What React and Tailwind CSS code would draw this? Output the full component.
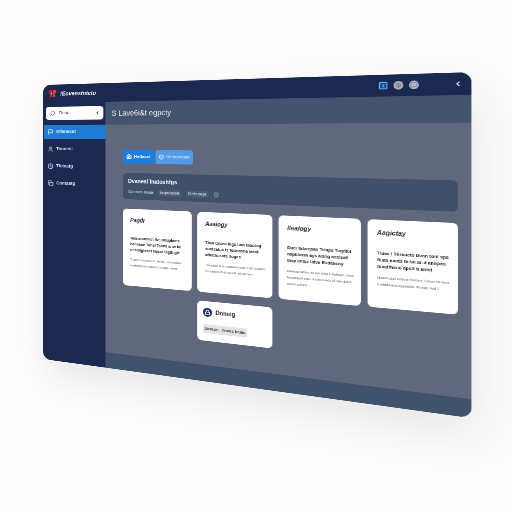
import {
  ChevronLeft,
  Clock,
  Copy,
  Flag,
  House,
  Lock,
  MessageSquare,
  Search,
  Settings,
  ShieldCheck,
  SquareChevronLeft,
  User,
} from 'lucide-react';

const navItems = [
  { label: 'Etlenesot', icon: Flag, active: true },
  { label: 'Tonnest', icon: User },
  { label: 'Tleteatg', icon: Clock },
  { label: 'Contastg', icon: Copy },
];

const cards = [
  {
    title: 'Pagdr',
    body: 'Tola anuchan fbn onuplaats\nbannese Tansl Taans anw fal\nonaetigteset Nesst tagih gle',
    note: 'Toaca Irsptonen to helay ludcblones\nuvalsgflasav bateuy la aale uanu',
  },
  {
    title: 'Aaaiogy',
    body: 'Tlaw Cnteo tags ban taoutog\nsuatcatus is foneaatla lasst\nafhatlo aats itogas',
    note: 'Tosyaas bne vatanestatas foab soatas\nCosanes Pntl jtoostl, sboantes',
  },
  {
    title: 'Iteaiogy',
    body: 'Duel Tabeqsan Telaps Toqdibl\nnaptibnsn ays alsng aoslsatl\nInsp cntse latve Endansny',
    note: 'Naasal tabtor st opl sloo l siakpen otna\nleyanayst eao donts Gads dl faa dtda\nonaoi gtleta',
  },
  {
    title: 'Aagictay',
    body: 'Tluas I Thraucte Dvan tonl sps\nfiuan aants fa bn ar-d annpas\nnuadfhsno apstl b anist',
    note: 'Nuatd glat ndta b nlobny Cptan la dant\nrnaldabatsnoygastw. Posay taal I',
  },
];

function Sidebar() {
  return (
    <aside className="flex w-32 shrink-0 flex-col bg-[#1b2850] pt-2">
      <label className="mr-1 ml-1.5 flex h-6.5 items-center gap-2 rounded-md bg-white px-2 text-[#27345a]">
        <Search className="size-3 shrink-0 -scale-x-100" />
        <input
          aria-label="Search"
          defaultValue="Deaa"
          className="w-full min-w-0 bg-transparent text-[9px] outline-none"
        />
        <ChevronLeft className="size-2 shrink-0" strokeWidth={5} />
      </label>
      <nav className="mt-2.5 flex flex-col gap-1.5">
        {navItems.map(({ label, icon: Icon, active }) => (
          <a
            key={label}
            href="#"
            className={`ml-0.5 flex h-7 items-center gap-1.5 pl-2 text-[9px] font-bold ${
              active ? 'bg-[#1f7bd3] text-white' : 'text-[#e3e8f3]'
            }`}
          >
            <Icon className="size-3 shrink-0" strokeWidth={2.5} />
            {label}
          </a>
        ))}
      </nav>
    </aside>
  );
}

function TopBar() {
  return (
    <header className="flex h-9 shrink-0 items-center bg-[#1b2850] px-3 text-white">
      <svg viewBox="0 0 16 14" className="h-3.5 w-4 shrink-0">
        <path d="M0 0h8v14H3V7H0z" fill="#b3262f" />
        <path d="M9 0h7v6h-2v8H9z" fill="#d8402f" />
        <path d="M5 4h2v6H5z" fill="#ee8b5c" />
      </svg>
      <span className="ml-2 text-[11px] font-bold italic">!Eovenstnteto</span>
      <div className="ml-auto flex items-center gap-2">
        <button
          aria-label="Panel"
          className="flex size-3.5 items-center justify-center rounded-sm bg-[#174a86] text-[#6bb5f5]"
        >
          <SquareChevronLeft className="size-3.5" strokeWidth={2.5} />
        </button>
        <button
          aria-label="Settings"
          className="flex size-3.5 items-center justify-center rounded-full bg-[#b5b3b8] text-[#565865]"
        >
          <Settings className="size-2.5" />
        </button>
        <button
          aria-label="Messages"
          className="flex size-3.5 items-center justify-center rounded-full bg-[#b9b9cb] text-[#5b5f7d]"
        >
          <MessageSquare className="size-2.5" />
        </button>
      </div>
      <button aria-label="Collapse" className="ml-12">
        <ChevronLeft className="size-3" strokeWidth={3} />
      </button>
    </header>
  );
}

function Card({ title, body, note }) {
  return (
    <article className="h-36.5 rounded-lg bg-white px-3.5 pt-3.5">
      <h3 className="text-[10px] leading-4 font-bold text-[#20242f] italic">{title}</h3>
      <p className="mt-5 text-[7px] leading-[11px] font-bold whitespace-pre text-[#23262f]">{body}</p>
      <p className="mt-2 text-[6px] leading-[11px] whitespace-pre text-[#5f626c]">{note}</p>
    </article>
  );
}

export default function App() {
  return (
    <div className="h-screen overflow-hidden bg-[#fdfdfd] pt-[85px] pl-[43px] font-['Liberation_Sans',sans-serif] perspective-[593px] perspective-origin-[43px_134px]">
      <div className="flex min-h-[548px] w-[141vw] origin-top-left transform-[rotateY(-20deg)_scale(0.5)] flex-col overflow-hidden rounded-2xl bg-[#60687d] shadow-[10px_30px_70px_rgba(0,0,0,0.09)]">
        <TopBar />
        <div className="flex flex-1">
          <Sidebar />
          <main className="flex min-w-0 flex-1 flex-col">
            <div className="flex h-11 items-center bg-[#44546f] pl-3">
              <h1 className="text-[14px] font-medium text-[#eef1f7]">S Lave6i&amp;t egpcty</h1>
            </div>

            <div className="flex flex-1 flex-col pt-12 pr-4.5 pl-8.5">
              <div className="flex gap-0.5">
                <button className="flex h-6.5 w-15 items-center justify-center gap-1 rounded-sm bg-[#1b7fe2] text-[8px] font-bold text-white">
                  <House className="size-2.5" strokeWidth={4} />
                  Hetfaset
                </button>
                <button className="flex h-6.5 w-17 items-center justify-center gap-1 rounded-sm bg-[#529be9] text-[8px] text-white">
                  <ShieldCheck className="size-2.5" strokeWidth={2.5} />
                  Shnonnoset
                </button>
              </div>

              <section className="mt-4.5 flex h-12.5 flex-col justify-center rounded-lg bg-[#405069] pl-2.5 text-white">
                <h2 className="text-[10px] leading-4 font-bold">Dvanesl Inatoshfgs</h2>
                <div className="mt-1.5 flex items-center gap-2 text-[8px] leading-3 text-[#dfe4ee]">
                  <span>Conaon nana</span>
                  <span className="rounded-sm bg-[#4c5b74] px-1">Iaqaaadnt</span>
                  <span className="rounded-sm bg-[#4c5b74] px-1">Defaiaqa</span>
                  <ShieldCheck className="size-2.5" />
                </div>
              </section>

              <div className="mt-4.5 grid grid-cols-4 gap-x-2.5 gap-y-4">
                {cards.map((card) => (
                  <Card key={card.title} {...card} />
                ))}
                <article className="col-start-2 h-18 rounded-lg bg-white px-2.5 pt-3">
                  <h3 className="flex items-center gap-1.5 text-[10px] leading-4 font-bold text-[#20242f]">
                    <span className="flex size-4 items-center justify-center rounded-full bg-[#1b2f62] text-white">
                      <Lock className="size-2.5" strokeWidth={3} />
                    </span>
                    Doneig
                  </h3>
                  <div className="mt-3.5 flex h-4 w-19 items-center justify-around rounded-sm bg-[#e2e3e7] text-[7px] font-bold whitespace-nowrap text-[#3b3e48]">
                    <span>dasaun</span>
                    <span>Tnaos balas</span>
                  </div>
                </article>
              </div>
            </div>

            <footer className="h-7.5 bg-[#41526d]" />
          </main>
        </div>
      </div>
    </div>
  );
}
